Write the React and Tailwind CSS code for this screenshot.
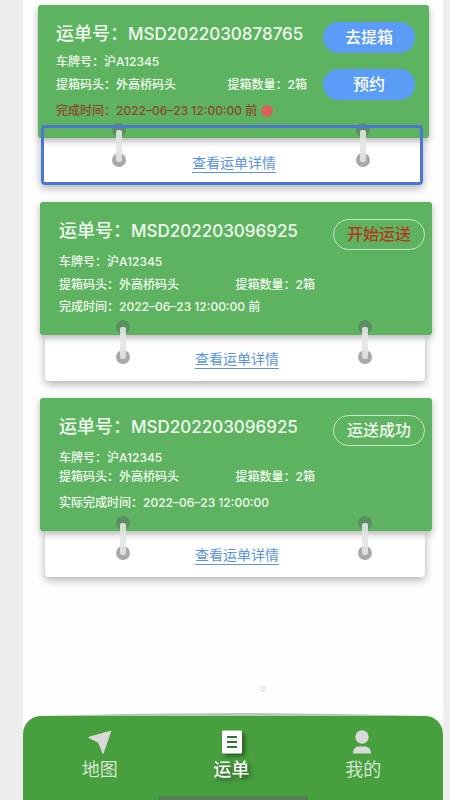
import React from 'react';
import clsx from 'clsx';

const orders = [
  {
    id: 'MSD2022030878765',
    plate: '沪A12345',
    dock: '外高桥码头',
    count: '2箱',
    timeLabel: '完成时间：',
    time: '2022–06–23 12:00:00 前',
    urgent: true,
    selected: true,
    actions: [
      { label: '去提箱', style: 'filled' },
      { label: '预约', style: 'filled' },
    ],
    card: 'ml-[15px] mr-[14px]',
    sheet: 'ml-[3px] mr-[6px] h-[47px]',
    green: 'pr-[14px] pl-[18px]',
    plateGap: 'mt-[5px]',
    dockGap: 'mt-[5px]',
    timeGap: 'mt-2',
    middle: 'pr-4',
  },
  {
    id: 'MSD202203096925',
    plate: '沪A12345',
    dock: '外高桥码头',
    count: '2箱',
    timeLabel: '完成时间：',
    time: '2022–06–23 12:00:00 前',
    actions: [{ label: '开始运送', style: 'alert' }],
    card: 'ml-[17px] mr-[11px]',
    sheet: 'ml-[5px] mr-[7px] h-[46px]',
    green: 'pr-[7px] pl-[19px]',
    plateGap: 'mt-2',
    dockGap: 'mt-[5px]',
    timeGap: 'mt-1',
    middle: 'pr-[18px]',
  },
  {
    id: 'MSD202203096925',
    plate: '沪A12345',
    dock: '外高桥码头',
    count: '2箱',
    timeLabel: '实际完成时间：',
    time: '2022–06–23 12:00:00',
    actions: [{ label: '运送成功', style: 'outline' }],
    card: 'ml-[17px] mr-[11px]',
    sheet: 'ml-[5px] mr-[7px] h-[46px]',
    green: 'pr-[7px] pl-[19px]',
    plateGap: 'mt-2',
    dockGap: 'mt-px',
    timeGap: 'mt-2',
    middle: 'pr-[18px]',
  },
];

function Ring() {
  return (
    <svg width="14" height="46" viewBox="0 0 14 46" aria-hidden="true">
      <circle cx="7" cy="8" r="7" fill="#5b8f61" />
      <circle cx="7" cy="38" r="7" fill="#a9a9a9" />
      <rect x="4" y="8" width="6" height="32" rx="2" fill="#e2e4e2" fillOpacity="0.9" />
    </svg>
  );
}

function Action({ label, style }) {
  return (
    <button
      type="button"
      className={clsx(
        'h-[31px] w-[92px] rounded-full text-[16px] leading-[29px] font-medium',
        style === 'filled' && 'bg-[#5a9cf8] text-white',
        style === 'alert' && 'border border-[#c4e8c4] text-[#b23a20]',
        style === 'outline' && 'border border-[#c4e8c4] text-[#f0fbf0]'
      )}
    >
      {label}
    </button>
  );
}

function OrderCard({ order }) {
  return (
    <article className={order.card}>
      <div
        className={clsx(
          'relative z-10 flex h-[133px] justify-between rounded-[3px] bg-[#5eb360] text-[12px] leading-[18px] font-medium text-[#effbef] shadow-[0_3px_7px_rgba(0,0,0,0.3)]',
          order.green
        )}
      >
        <div className={clsx('min-w-0 flex-1 whitespace-nowrap pt-[15px]', order.middle)}>
          <h2 className="text-[18px] leading-7 font-medium">
            运单号：<span className="text-[17px]">{order.id}</span>
          </h2>
          <p className={order.plateGap}>车牌号：{order.plate}</p>
          <div className={clsx('flex justify-between', order.dockGap)}>
            <p>提箱码头：{order.dock}</p>
            <p>提箱数量：{order.count}</p>
          </div>
          <p className={clsx('flex items-center', order.timeGap, order.urgent && 'text-[#8c4a28]')}>
            {order.timeLabel}
            {order.time}
            {order.urgent && <span className="ml-1 size-3 rounded-full bg-[#d9605a]" />}
          </p>
        </div>
        <div className="flex shrink-0 flex-col gap-4 pt-[17px]">
          {order.actions.map((a) => (
            <Action key={a.label} {...a} />
          ))}
        </div>
      </div>
      <div
        className={clsx(
          'relative flex items-center justify-center rounded-b-[4px] bg-white pt-[3px] pl-1 shadow-[0_3px_8px_rgba(0,0,0,0.32)]',
          order.sheet
        )}
      >
        <a href="#detail" className="border-b border-[#5a94e0] text-[14px] leading-[18px] text-[#5a94e0]">
          查看运单详情
        </a>
        <div className="pointer-events-none absolute inset-x-0 -top-4 z-20 flex justify-between pr-[53px] pl-[71px]">
          <Ring />
          <Ring />
        </div>
        {order.selected && (
          <div className="pointer-events-none absolute inset-x-0 -top-[13px] bottom-0 z-30 rounded-[4px] border-3 border-[#4c76d4]" />
        )}
      </div>
    </article>
  );
}

function Tab({ label, active, children }) {
  return (
    <a
      href="#tab"
      aria-current={active ? 'page' : undefined}
      className={clsx(
        'flex flex-1 flex-col items-center text-[18px] leading-7',
        active ? 'font-medium text-white drop-shadow-[3px_3px_2px_rgba(0,0,0,0.4)]' : 'text-[#d5e5d3]'
      )}
    >
      {children}
      {label}
    </a>
  );
}

export default function App() {
  return (
    <div className="min-h-screen bg-[#eeeeee] pr-[7px] pl-[23px] font-[Inter,'Noto_Sans_CJK_SC',sans-serif]">
      <div className="flex min-h-screen flex-col bg-[#fefefe]">
        <main className="flex flex-1 flex-col gap-[17px] pt-[5px]">
          {orders.map((order, i) => (
            <OrderCard key={i} order={order} />
          ))}
          <div className="mt-auto mb-5 flex justify-center pl-[60px]">
            <svg width="8" height="8" viewBox="0 0 8 8" fill="none" stroke="#e0e0e0" strokeWidth="1.3" aria-hidden="true">
              <path d="M1 1l3 2.5L7 1M1 4l3 2.5L7 4" />
            </svg>
          </div>
        </main>
        <nav className="relative">
          <svg className="block h-[3px] w-full" viewBox="0 0 420 3" preserveAspectRatio="none" aria-hidden="true">
            <path d="M14 3Q210-3 406 3z" fill="#b9c8b7" />
          </svg>
          <div className="flex h-[84px] overflow-hidden rounded-t-[18px] bg-[#489f3e] pt-[13px] pr-[14px] pl-[11px]">
            <Tab label="地图">
              <svg width="26" height="27" viewBox="0 0 26 27" fill="#d9d9d9" aria-hidden="true">
                <path d="M24.500 1.500Q24 1.500 2 7.800Q1 8.600 2 9.200L9.500 12.800Q11.500 14 12.300 16.300L15.200 24.300Q16 25.300 16.600 24.200z" />
              </svg>
            </Tab>
            <Tab label="运单" active>
              <svg width="26" height="27" viewBox="0 0 26 27" aria-hidden="true">
                <rect x="3" y="1.500" width="20" height="23" rx="1" fill="#fff" />
                <path d="M8 8h10M8 13h10M8 18h10" stroke="#34752f" strokeWidth="2" />
              </svg>
            </Tab>
            <Tab label="我的">
              <svg width="26" height="27" viewBox="0 0 26 27" fill="#d9d9d9" aria-hidden="true">
                <circle cx="12" cy="8" r="6.700" />
                <path d="M3 24.500c0-4.800 2.500-7 6-7h6c3.500 0 6 2.200 6 7z" />
              </svg>
            </Tab>
          </div>
          <div className="absolute bottom-0 left-1/2 h-1 w-[150px] -translate-x-1/2 rounded-t-full bg-[#527f55]" />
        </nav>
      </div>
    </div>
  );
}
